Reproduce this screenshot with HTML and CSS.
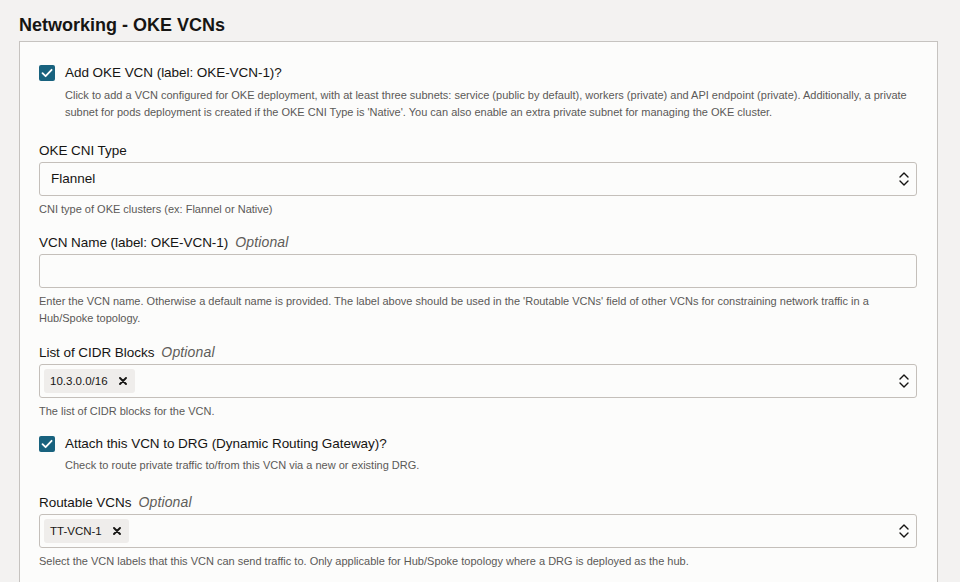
FILE: index.html
```html
<!DOCTYPE html>
<html lang="en">
<head>
<meta charset="utf-8">
<title>Networking - OKE VCNs</title>
<link rel="stylesheet" href="styles.css">
</head>
<body>
<div class="page">
  <h2 class="title">Networking - OKE VCNs</h2>
  <section class="panel">
    <div class="check-field check-field--first">
      <div class="check-row">
        <span class="checkbox"><svg viewBox="0 0 16 16" width="16" height="16"><path d="M3.5 8.2 L6.6 11.2 L12.6 4.8" fill="none" stroke="#fff" stroke-width="1.8" stroke-linecap="round" stroke-linejoin="round"/></svg></span>
        <span class="check-label">Add OKE VCN (label: OKE-VCN-1)?</span>
      </div>
      <p class="check-help">Click to add a VCN configured for OKE deployment, with at least three subnets: service (public by default), workers (private) and API endpoint (private). Additionally, a private subnet for pods deployment is created if the OKE CNI Type is 'Native'. You can also enable an extra private subnet for managing the OKE cluster.</p>
    </div>

    <div class="field">
      <label class="label">OKE CNI Type</label>
      <div class="input select">
        <span class="value">Flannel</span>
        <svg class="chev" viewBox="0 0 10 14" width="10" height="14"><path d="M1 5 L5 1 L9 5 M1 9 L5 13 L9 9" fill="none" stroke="#161513" stroke-width="1.4" stroke-linecap="round" stroke-linejoin="round"/></svg>
      </div>
      <p class="help">CNI type of OKE clusters (ex: Flannel or Native)</p>
    </div>

    <div class="field">
      <label class="label">VCN Name (label: OKE-VCN-1)<span class="opt">Optional</span></label>
      <div class="input"></div>
      <p class="help">Enter the VCN name. Otherwise a default name is provided. The label above should be used in the 'Routable VCNs' field of other VCNs for constraining network traffic in a Hub/Spoke topology.</p>
    </div>

    <div class="field">
      <label class="label">List of CIDR Blocks<span class="opt">Optional</span></label>
      <div class="input select chips">
        <span class="chip">10.3.0.0/16<svg class="x" viewBox="0 0 8 8" width="8" height="8"><path d="M1 1 L7 7 M7 1 L1 7" stroke="#161513" stroke-width="1.9" stroke-linecap="round"/></svg></span>
        <svg class="chev" viewBox="0 0 10 14" width="10" height="14"><path d="M1 5 L5 1 L9 5 M1 9 L5 13 L9 9" fill="none" stroke="#161513" stroke-width="1.4" stroke-linecap="round" stroke-linejoin="round"/></svg>
      </div>
      <p class="help">The list of CIDR blocks for the VCN.</p>
    </div>

    <div class="check-field">
      <div class="check-row">
        <span class="checkbox"><svg viewBox="0 0 16 16" width="16" height="16"><path d="M3.5 8.2 L6.6 11.2 L12.6 4.8" fill="none" stroke="#fff" stroke-width="1.8" stroke-linecap="round" stroke-linejoin="round"/></svg></span>
        <span class="check-label">Attach this VCN to DRG (Dynamic Routing Gateway)?</span>
      </div>
      <p class="check-help">Check to route private traffic to/from this VCN via a new or existing DRG.</p>
    </div>

    <div class="field">
      <label class="label">Routable VCNs<span class="opt">Optional</span></label>
      <div class="input select chips">
        <span class="chip">TT-VCN-1<svg class="x" viewBox="0 0 8 8" width="8" height="8"><path d="M1 1 L7 7 M7 1 L1 7" stroke="#161513" stroke-width="1.9" stroke-linecap="round"/></svg></span>
        <svg class="chev" viewBox="0 0 10 14" width="10" height="14"><path d="M1 5 L5 1 L9 5 M1 9 L5 13 L9 9" fill="none" stroke="#161513" stroke-width="1.4" stroke-linecap="round" stroke-linejoin="round"/></svg>
      </div>
      <p class="help">Select the VCN labels that this VCN can send traffic to. Only applicable for Hub/Spoke topology where a DRG is deployed as the hub.</p>
    </div>
  </section>
</div>
</body>
</html>
```

FILE: styles.css
```css
* { box-sizing: border-box; }
html, body { margin: 0; padding: 0; }
body {
  background: #f3f2f1;
  font-family: "Liberation Sans", Arial, sans-serif;
  color: #161513;
  overflow: hidden;
}
.page {
  padding: 14px 22px 0 19px;
}
.title {
  margin: 0 0 5px 0;
  font-size: 18px;
  line-height: 22px;
  font-weight: bold;
  color: #161513;
}
.panel {
  background: #fcfcfb;
  border: 1px solid #c6c3c0;
  padding: 21px 20px 40px 19px;
  display: flex;
  flex-direction: column;
  gap: 14.5px;
}
.check-field { padding-bottom: 3.5px; margin-top: -0.5px; }
.check-field--first { padding-bottom: 5.5px; margin-top: 0; }
.check-row {
  display: flex;
  align-items: center;
  gap: 10px;
}
.checkbox {
  width: 16px;
  height: 16px;
  border-radius: 2px;
  background: #18627e;
  display: inline-flex;
  flex: none;
}
.check-label {
  font-size: 13.5px;
  letter-spacing: -0.05px;
  line-height: 20px;
}
.check-help {
  margin: 3.5px 0 0 26px;
  font-size: 11px;
  line-height: 17px;
  color: #5b5957;
}
.label {
  display: block;
  font-size: 13.5px;
  letter-spacing: -0.05px;
  line-height: 20px;
  margin-bottom: 1px;
}
.opt {
  font-style: italic;
  font-size: 14px;
  letter-spacing: 0.15px;
  color: #5f5c59;
  margin-left: 7px;
}
.input {
  height: 34px;
  border: 1px solid #c4bfba;
  border-radius: 3px;
  background: #fcfcfb;
  display: flex;
  align-items: center;
  padding: 0 7px 0 11px;
}
.select { justify-content: space-between; }
.value { font-size: 13.5px; }
.chev { flex: none; }
.chips { padding-left: 4px; }
.chip {
  display: inline-flex;
  align-items: center;
  height: 24px;
  padding: 0 8px 0 6px;
  background: #efedeb;
  border-radius: 3px;
  font-size: 11.5px;
  gap: 11px;
}
.x { flex: none; }
.help {
  margin: 5px 0 0 0;
  font-size: 11px;
  line-height: 17px;
  color: #5b5957;
}
```
